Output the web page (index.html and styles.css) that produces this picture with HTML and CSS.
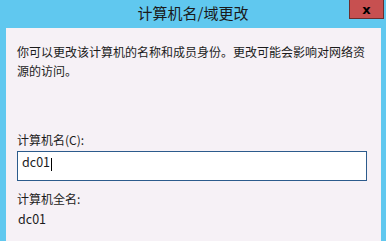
FILE: index.html
```html
<!DOCTYPE html>
<html lang="zh-CN">
<head>
<meta charset="utf-8">
<link rel="stylesheet" href="styles.css">
</head>
<body>
<div class="window">
  <div class="titlebar">
    <span class="spacer"></span>
    <span class="title">计算机名/域更改</span>
    <span class="controls"><button class="close" type="button">x</button></span>
  </div>
  <div class="panel">
    <p class="desc">你可以更改该计算机的名称和成员身份。更改可能会影响对网络资源的访问。</p>
    <div class="label first">计算机名(C):</div>
    <div class="input"><span class="value">dc01</span><span class="caret"></span></div>
    <div class="label second">计算机全名:</div>
    <div class="fullname">dc01</div>
  </div>
</div>
</body>
</html>
```

FILE: styles.css
```css
html, body {
  margin: 0;
  padding: 0;
}
body {
  width: 386px;
  height: 241px;
  overflow: hidden;
  font-family: "Noto Sans CJK SC", "Noto Sans", sans-serif;
  color: #1b1b1b;
}
.window {
  width: 386px;
  height: 241px;
  background: #60c8ef;
  display: flex;
  flex-direction: column;
}
.titlebar {
  height: 28px;
  display: grid;
  grid-template-columns: 1fr auto 1fr;
  align-items: start;
}
.title {
  font-size: 15px;
  line-height: 25px;
  color: #1a1a1a;
  white-space: nowrap;
}
.controls {
  display: flex;
  justify-content: flex-end;
  padding-right: 2px;
}
.close {
  width: 35px;
  height: 19px;
  box-sizing: border-box;
  margin: 0;
  padding: 0;
  background: #c75050;
  border: 1px solid #6b2e2e;
  border-top: 0;
  color: #000;
  font-family: "DejaVu Sans", sans-serif;
  font-weight: bold;
  font-size: 13px;
  line-height: 15px;
  text-align: center;
}
.panel {
  flex: 1;
  margin: 0 5px 0 6px;
  background: #f6f1f6;
  padding: 14px 14px 0 11px;
  font-size: 12px;
  line-height: 19px;
}
.desc {
  margin: 0;
  width: 352px;
}
.label.first {
  margin-top: 50px;
}
.input {
  margin-top: 2px;
  width: 350px;
  height: 30px;
  box-sizing: border-box;
  border: 1px solid #2c5b8c;
  background: #fff;
  padding: 0 0 0 4px;
  display: flex;
  align-items: flex-start;
  font-size: 12.5px;
}
.caret {
  width: 1px;
  height: 13px;
  margin-top: 6px;
  margin-left: 1px;
  background: #000;
}
.label.second {
  margin-top: 8px;
}
.fullname {
  margin-top: 1px;
  padding-left: 1px;
  font-size: 12.5px;
}
```
